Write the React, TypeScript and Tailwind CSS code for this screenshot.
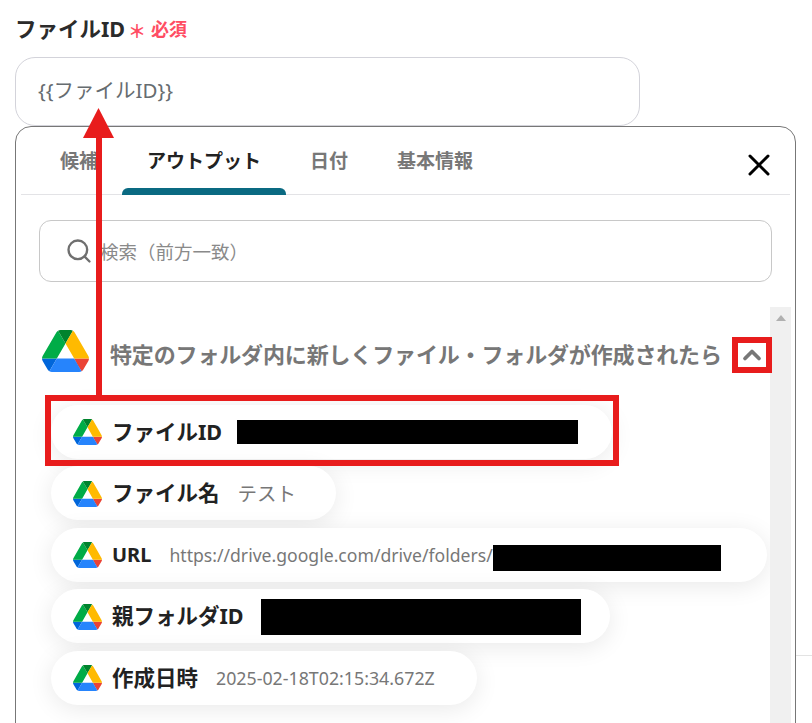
import React from 'react'
import { ChevronUp, Search, X } from 'lucide-react'

const tabs = ['候補', 'アウトプット', '日付', '基本情報']

const DriveIcon = ({ className }: { className: string }) => (
  <svg viewBox="0 0 87.3 78" className={className}>
    <path d="m6.6 66.85 3.85 6.65c.8 1.4 1.95 2.5 3.3 3.3l13.75-23.8h-27.5c0 1.55.4 3.1 1.2 4.5z" fill="#0066da" />
    <path d="m43.65 25-13.75-23.8c-1.35.8-2.5 1.9-3.3 3.3l-25.4 44a9.06 9.06 0 0 0 -1.2 4.5h27.5z" fill="#00ac47" />
    <path d="m73.55 76.8c1.35-.8 2.5-1.9 3.3-3.3l1.6-2.75 7.65-13.25c.8-1.4 1.2-2.95 1.2-4.5h-27.502l5.852 11.5z" fill="#ea4335" />
    <path d="m43.65 25 13.75-23.8c-1.35-.8-2.9-1.2-4.5-1.2h-18.5c-1.6 0-3.15.45-4.5 1.2z" fill="#00832d" />
    <path d="m59.8 53h-32.3l-13.75 23.8c1.35.8 2.9 1.2 4.5 1.2h50.8c1.6 0 3.15-.45 4.5-1.2z" fill="#2684fc" />
    <path d="m73.4 26.5-12.7-22c-.8-1.4-1.95-2.5-3.3-3.3l-13.75 23.8 16.15 28h27.45c0-1.55-.4-3.1-1.2-4.5z" fill="#ffba00" />
  </svg>
)

const OutputRow = ({ className, children }: { className: string; children: React.ReactNode }) => (
  <div className={`flex h-[54px] items-center rounded-[27px] bg-white pl-[22px] pt-[1px] shadow-[0_4px_24px_rgba(0,0,0,0.09)] ${className}`}>
    <DriveIcon className="mr-[10px] h-[26px] w-[29px] shrink-0" />
    {children}
  </div>
)

export default function App() {
  return (
    <div className="relative h-[723px] w-[812px] overflow-hidden bg-white pl-[15px] pt-[14px] font-['Noto_Sans','Noto_Sans_CJK_JP',sans-serif]">
      {/* Field label */}
      <div className="flex h-[29px] items-center">
        <span className="text-[21.5px] font-bold leading-none text-[#2b2b2b]">ファイルID</span>
        <span className="ml-[3px] mt-[5px] text-[18px] font-bold leading-none text-[#ff4d63]">＊</span>
        <span className="ml-[5px] text-[18px] font-bold leading-none text-[#ff4d63]">必須</span>
      </div>

      {/* Input */}
      <div className="mt-[14px] flex h-[69px] w-[625px] items-center rounded-[20px] border border-[#d3d3da] pb-[3px] pl-[22px] text-[20.5px] text-[#666c70]">
        {'{{ファイルID}}'}
      </div>

      {/* Output picker */}
      <div className="h-[700px] w-[781px] rounded-t-[16px] border border-[#777777] bg-white">
        <div className="mx-[5px] flex h-[68px] items-end gap-[49px] border-b border-[#e3e3e6] pl-[39px] pr-[13px]">
          {tabs.map((tab) => (
            <div
              key={tab}
              className={`flex h-full items-center pt-[2px] text-[19px] font-bold leading-none ${
                tab === 'アウトプット' ? 'relative text-[#222222]' : 'text-[#777777]'
              }`}
            >
              {tab}
              {tab === 'アウトプット' && (
                <div className="absolute bottom-[-1px] left-[-25px] right-[-25px] h-[7px] rounded-t-[6px] bg-[#0a6a82]" />
              )}
            </div>
          ))}
          <X className="mb-[11px] ml-auto h-[36px] w-[36px] self-end text-black" strokeWidth={2} />
        </div>

        <div className="mx-[23px] mt-[25px] flex h-[62px] items-center rounded-[12px] border border-[#c8c8c8] pl-[25px] text-[18.5px] text-[#8a8a8a]">
          <Search className="mr-[7px] h-[28px] w-[28px] text-[#6f6f6f]" strokeWidth={2} />
          <span className="pt-[2px]">検索（前方一致）</span>
        </div>

        <div className="mt-[25px] flex pl-[26px] pr-[4px]">
          <div className="flex-1">
            <div className="flex h-[97.5px] items-start">
              <DriveIcon className="mt-[23px] h-[42px] w-[47px] shrink-0" />
              <span className="ml-[21px] mt-[33px] text-[22px] font-bold leading-[28px] tracking-[-0.15px] text-[#777777]">
                特定のフォルダ内に新しくファイル・フォルダが作成されたら
              </span>
              <ChevronUp className="ml-[16px] mt-[34px] h-[28px] w-[28px] shrink-0 text-[#777777]" strokeWidth={3.2} />
            </div>
            <div className="flex flex-col items-start gap-[7.5px] pl-[9px]">
              <OutputRow className="w-[561px]">
                <span className="text-[21.5px] font-bold text-[#222222]">ファイルID</span>
                <span className="mb-[1px] ml-[15px] h-[24px] w-[341px] bg-black" />
              </OutputRow>
              <OutputRow className="w-[285px]">
                <span className="text-[21.5px] font-bold text-[#222222]">ファイル名</span>
                <span className="ml-[18px] text-[19.5px] text-[#777777]">テスト</span>
              </OutputRow>
              <OutputRow className="w-[716px]">
                <span className="text-[20px] font-bold text-[#222222]">URL</span>
                <span className="ml-[18px] text-[17.6px] text-[#777777]">https://drive.google.com/drive/folders/</span>
                <span className="mt-[6px] h-[26px] w-[228px] bg-black" />
              </OutputRow>
              <OutputRow className="w-[559px]">
                <span className="text-[21.5px] font-bold text-[#222222]">親フォルダID</span>
                <span className="ml-[17px] h-[36px] w-[320px] bg-black" />
              </OutputRow>
              <OutputRow className="w-[426px]">
                <span className="text-[21.5px] font-bold text-[#222222]">作成日時</span>
                <span className="ml-[18px] text-[17.8px] text-[#777777]">2025-02-18T02:15:34.672Z</span>
              </OutputRow>
            </div>
          </div>
          {/* Scrollbar */}
          <div className="flex h-[500px] w-[21px] shrink-0 justify-center bg-[#f0f0f0] pt-[8px]">
            <div className="h-0 w-0 border-x-[5px] border-b-[6px] border-x-transparent border-b-[#b0b0b0]" />
          </div>
        </div>
      </div>

      {/* Edge of the card behind the picker */}
      <div className="absolute left-[796px] top-[655px] h-px w-[16px] bg-[#e3e3e3]" />

      {/* Annotations */}
      <svg className="absolute left-[80px] top-[105px] h-[295px] w-[40px]" viewBox="0 0 40 295">
        <path d="M18.5 3 L34 33 L3 33 Z" fill="#e81c1c" />
        <rect x="16" y="30" width="6" height="262" fill="#e81c1c" />
      </svg>
      <div className="absolute left-[732px] top-[337px] h-[36px] w-[40px] border-[6px] border-[#e81c1c]" />
      <div className="absolute left-[45px] top-[395px] h-[71px] w-[574px] border-[6px] border-[#e81c1c]" />
    </div>
  )
}
